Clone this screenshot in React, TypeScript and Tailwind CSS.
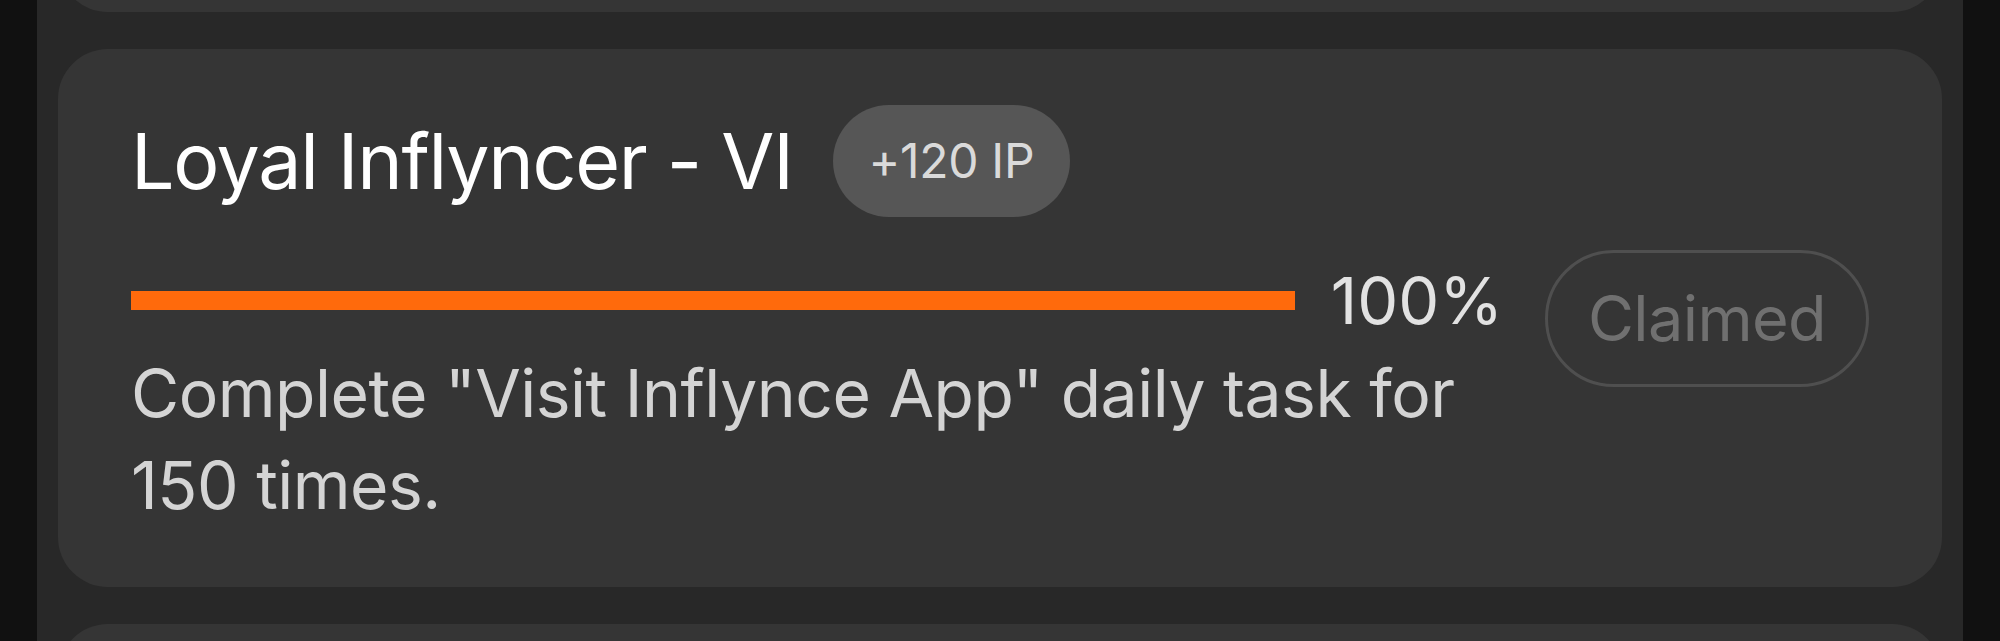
import React from 'react';

const font = { fontFamily: 'Inter, "Noto Sans", sans-serif' };

interface Quest {
  title: string;
  reward: string;
  progress: number;
  description: string;
  claimed: boolean;
}

const quest: Quest = {
  title: 'Loyal Inflyncer - VI',
  reward: '+120 IP',
  progress: 100,
  description: 'Complete "Visit Inflynce App" daily task for 150 times.',
  claimed: true,
};

function QuestCard({ q }: { q: Quest }) {
  return (
    <div className="rounded-[50px] bg-[#353535] px-[73px] pt-[56px] pb-[56px]">
      <div className="flex h-[112px] items-center gap-[40px]">
        <h2 className="text-[77px] leading-none font-normal tracking-[-1.3px] text-white">{q.title}</h2>
        <span className="flex h-[112px] items-center rounded-full bg-[#565656] px-[36px] text-[48px] leading-none tracking-[-0.3px] text-[#dadada]">
          {q.reward}
        </span>
      </div>

      <div className="mt-[33px] flex items-start gap-[42px]">
        <div className="flex-1 pt-[18px]">
          <div className="flex h-[65px] items-center gap-[36px]">
            <div className="h-[19px] flex-1 bg-[#3a3a3a]">
              <div className="h-full bg-[#ff6a0c]" style={{ width: `${q.progress}%` }} />
            </div>
            <span className="text-[65px] leading-none text-[#e2e2e2]">{q.progress}%</span>
          </div>
          <p className="mt-[14px] text-[66px] leading-[92px] tracking-[-0.5px] text-[#d4d4d4]">{q.description}</p>
        </div>
        <button className="flex h-[137px] w-[324px] shrink-0 items-center justify-center rounded-full border-[3px] border-[#4f4f4f] text-[63px] leading-none tracking-[-0.6px] text-[#707070]">
          {q.claimed ? 'Claimed' : 'Claim'}
        </button>
      </div>
    </div>
  );
}

export default function App() {
  return (
    <div className="flex h-[641px] justify-center overflow-hidden bg-[#111111]" style={font}>
      <div className="flex w-[1926px] flex-col gap-[37px] bg-[#282828] px-[21px]">
        <div className="-mt-[188px] h-[200px] shrink-0 rounded-[50px] bg-[#353535]" />
        <QuestCard q={quest} />
        <div className="h-[300px] shrink-0 rounded-[50px] bg-[#353535]" />
      </div>
    </div>
  );
}
